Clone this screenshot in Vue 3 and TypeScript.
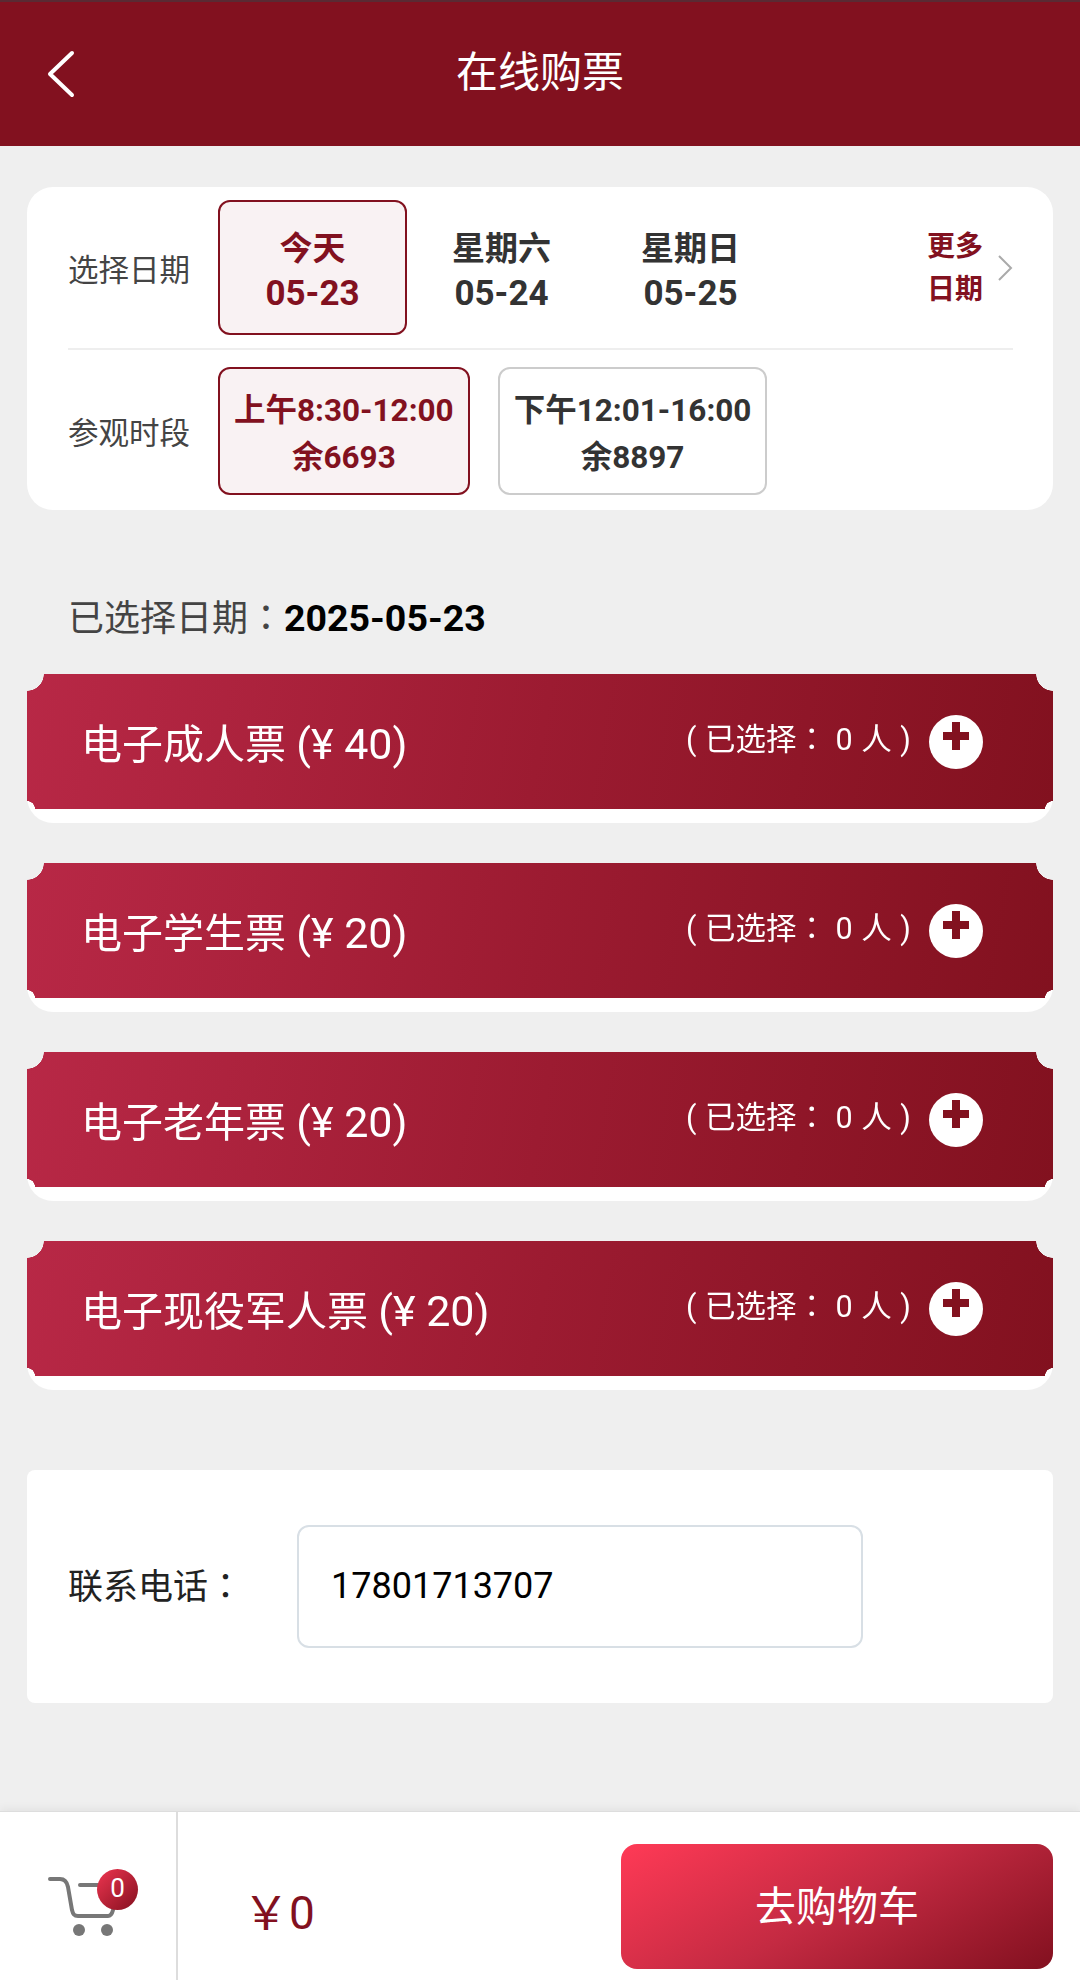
<script setup lang="ts">
interface DateItem { top: string; date: string; active?: boolean }
interface SlotItem { time: string; left: string; active?: boolean }
interface Ticket { name: string; price: string }
const dates: DateItem[] = [
  { top: '今天', date: '05-23', active: true },
  { top: '星期六', date: '05-24' },
  { top: '星期日', date: '05-25' }
]
const slots: SlotItem[] = [
  { time: '上午8:30-12:00', left: '余6693', active: true },
  { time: '下午12:01-16:00', left: '余8897' }
]
const tickets: Ticket[] = [
  { name: '电子成人票', price: '(¥ 40)' },
  { name: '电子学生票', price: '(¥ 20)' },
  { name: '电子老年票', price: '(¥ 20)' },
  { name: '电子现役军人票', price: '(¥ 20)' }
]
</script>

<template>
  <div class="page">
    <header class="header">
      <svg class="back" width="30" height="50" viewBox="0 0 30 50" fill="none">
        <path d="M26 4 4 25l22 21" stroke="#fff" stroke-width="4" stroke-linecap="round" stroke-linejoin="round" />
      </svg>
      <h1 class="title">在线购票</h1>
    </header>

    <main class="main">
      <section class="card">
        <div class="row date-row">
          <div class="label">选择日期</div>
          <div v-for="d in dates" :key="d.date" class="date" :class="{ active: d.active }">
            <div>{{ d.top }}</div>
            <div class="num">{{ d.date }}</div>
          </div>
          <div class="more">
            <div class="more-text">更多<br />日期</div>
            <svg width="16" height="28" viewBox="0 0 16 28" fill="none">
              <path d="M2 2l12 12L2 26" stroke="#aaa" stroke-width="2" />
            </svg>
          </div>
        </div>
        <div class="divider"></div>
        <div class="row slot-row">
          <div class="label">参观时段</div>
          <div v-for="s in slots" :key="s.time" class="slot" :class="{ active: s.active }">
            <div>{{ s.time }}</div>
            <div>{{ s.left }}</div>
          </div>
        </div>
      </section>

      <div class="selected">已选择日期<span class="colon">：</span><b>2025-05-23</b></div>

      <div class="tickets">
        <div v-for="t in tickets" :key="t.name" class="ticket">
          <div class="ticket-face">
            <div class="ticket-name">{{ t.name }} <span class="ticket-price">{{ t.price }}</span></div>
            <div class="ticket-count">( 已选择<span class="colon">：</span> 0 人 )</div>
            <div class="plus"><span class="plus-h"></span><span class="plus-v"></span></div>
          </div>
        </div>
      </div>

      <section class="phone">
        <div class="phone-label">联系电话<span class="colon">：</span></div>
        <div class="phone-input">17801713707</div>
      </section>
    </main>

    <footer class="footer">
      <div class="cart">
        <svg width="72" height="64" viewBox="0 0 72 64" fill="none">
          <path d="M3 4h10c5 0 7 3 8 8l4 23c1 4 2 6 6 6h30c3 0 4-2 5-6M33 10h26" stroke="#777" stroke-width="4" stroke-linecap="round" />
          <circle cx="32" cy="55" r="6" fill="#777" />
          <circle cx="60" cy="55" r="6" fill="#777" />
        </svg>
        <span class="badge">0</span>
      </div>
      <div class="price">￥0</div>
      <button class="go"><span class="go-text">去购物车</span></button>
    </footer>
  </div>
</template>

<style scoped>
.page {
  width: 1080px;
  height: 1980px;
  display: flex;
  flex-direction: column;
  background: #efefef;
  font-family: Roboto, "Noto Sans CJK SC", sans-serif;
  color: #333;
  overflow: hidden;
}
.colon {
  font-family: "Noto Sans CJK TC", sans-serif;
}
.header {
  position: relative;
  height: 146px;
  flex: none;
  box-sizing: border-box;
  border-top: 2px solid #5a2a33;
  background: #82111f;
  display: flex;
  align-items: center;
  justify-content: center;
}
.back {
  position: absolute;
  left: 46px;
  top: 47px;
}
.title {
  margin: 0;
  font-size: 42px;
  font-weight: 400;
  color: #fff;
  padding-bottom: 11px;
}
.main {
  flex: 1;
  padding: 41px 27px 0;
}
.card {
  background: #fff;
  border-radius: 26px;
  height: 323px;
  box-sizing: border-box;
  padding: 13px 40px 15px 41px;
}
.row {
  display: flex;
  align-items: center;
}
.label {
  width: 150px;
  flex: none;
  font-size: 30.5px;
  color: #444;
}
.date {
  width: 189px;
  height: 135px;
  box-sizing: border-box;
  flex: none;
  border: 2px solid transparent;
  border-radius: 12px;
  padding-top: 6px;
  display: flex;
  flex-direction: column;
  align-items: center;
  justify-content: center;
  font-size: 33px;
  font-weight: 700;
  line-height: 45px;
}
.date .num {
  font-size: 35px;
}
.date.active,
.slot.active {
  border-color: #82111f;
  background: #f9f2f3;
  color: #82111f;
}
.more {
  margin-left: auto;
  display: flex;
  align-items: center;
  gap: 14px;
}
.more-text {
  font-size: 28px;
  font-weight: 700;
  line-height: 43px;
  color: #82111f;
  text-align: right;
}
.divider {
  height: 2px;
  background: #eee;
  margin: 13px 0 17px;
}
.slot {
  height: 128px;
  box-sizing: border-box;
  padding: 5px 14px 0;
  margin-right: 28px;
  flex: none;
  border: 2px solid #ccc;
  border-radius: 12px;
  display: flex;
  flex-direction: column;
  align-items: center;
  justify-content: center;
  font-size: 31.5px;
  font-weight: 700;
  line-height: 47px;
}
.selected {
  margin: 83px 0 37px 41px;
  height: 44px;
  line-height: 44px;
  font-size: 36px;
  color: #444;
}
.selected b {
  font-size: 37.5px;
  color: #000;
  font-weight: 700;
}
.tickets {
  display: flex;
  flex-direction: column;
  gap: 40px;
}
.ticket {
  height: 149px;
  background: linear-gradient(#fff, #fff) bottom / 100% 40px no-repeat;
  border-radius: 0 0 26px 26px;
}
.ticket-face {
  height: 135px;
  display: flex;
  align-items: center;
  color: #fff;
  background: linear-gradient(100deg, #b82846 0%, #9c1b31 50%, #82111f 100%);
  -webkit-mask:
    radial-gradient(circle 17px at 0 0, transparent 97%, #000 100%),
    radial-gradient(circle 17px at 100% 0, transparent 97%, #000 100%),
    radial-gradient(circle 8px at 0 100%, transparent 97%, #000 100%),
    radial-gradient(circle 8px at 100% 100%, transparent 97%, #000 100%);
  -webkit-mask-composite: source-in;
  mask:
    radial-gradient(circle 17px at 0 0, transparent 97%, #000 100%),
    radial-gradient(circle 17px at 100% 0, transparent 97%, #000 100%),
    radial-gradient(circle 8px at 0 100%, transparent 97%, #000 100%),
    radial-gradient(circle 8px at 100% 100%, transparent 97%, #000 100%);
  mask-composite: intersect;
}
.ticket-name {
  margin-left: 54px;
  font-size: 41px;
  padding-bottom: 1px;
}
.ticket-price {
  font-size: 43px;
}
.ticket-count {
  margin-left: auto;
  font-size: 30.5px;
  word-spacing: 1px;
  padding-bottom: 10px;
}
.plus {
  position: relative;
  width: 54px;
  height: 54px;
  margin: 1px 70px 0 18px;
  border-radius: 50%;
  background: #fff;
  flex: none;
}
.plus-h,
.plus-v {
  position: absolute;
  background: #82111f;
}
.plus-h {
  left: 14px;
  top: 17px;
  width: 26px;
  height: 8px;
}
.plus-v {
  left: 23px;
  top: 7px;
  width: 8px;
  height: 28px;
}
.phone {
  margin-top: 80px;
  height: 233px;
  background: #fff;
  border-radius: 8px;
  display: flex;
  align-items: center;
}
.phone-label {
  width: 270px;
  box-sizing: border-box;
  padding: 0 0 6px 41px;
  font-size: 35px;
  color: #222;
}
.phone-input {
  width: 566px;
  height: 123px;
  box-sizing: border-box;
  border: 2px solid #d8dfe5;
  border-radius: 12px;
  padding: 0 0 2px 32px;
  display: flex;
  align-items: center;
  font-size: 36px;
  color: #000;
}
.footer {
  flex: none;
  height: 169px;
  box-sizing: border-box;
  background: #fff;
  border-top: 1px solid #ddd;
  box-shadow: 0 -3px 8px rgba(0, 0, 0, 0.05);
  display: flex;
  align-items: center;
  padding-right: 27px;
}
.cart {
  position: relative;
  width: 178px;
  height: 100%;
  flex: none;
  box-sizing: border-box;
  border-right: 2px solid #ddd;
  padding: 63px 0 0 47px;
}
.cart svg {
  display: block;
}
.badge {
  position: absolute;
  left: 97px;
  top: 57px;
  width: 41px;
  height: 41px;
  border-radius: 50%;
  background: linear-gradient(135deg, #ee3550, #84101f);
  color: #fff;
  font-size: 26px;
  text-align: center;
  line-height: 38px;
}
.price {
  margin-left: 65px;
  font-size: 46px;
  color: #82111f;
  padding-top: 26px;
}
.go {
  margin: 0 0 0 auto;
  width: 432px;
  height: 125px;
  border: 0;
  border-radius: 16px;
  background: linear-gradient(150deg, #ff3a56 0%, #c42a42 50%, #82101f 100%);
  color: #fff;
  font-family: inherit;
  font-size: 41px;
  position: relative;
  top: 10px;
}
.go-text {
  position: relative;
  top: -3px;
}
</style>
